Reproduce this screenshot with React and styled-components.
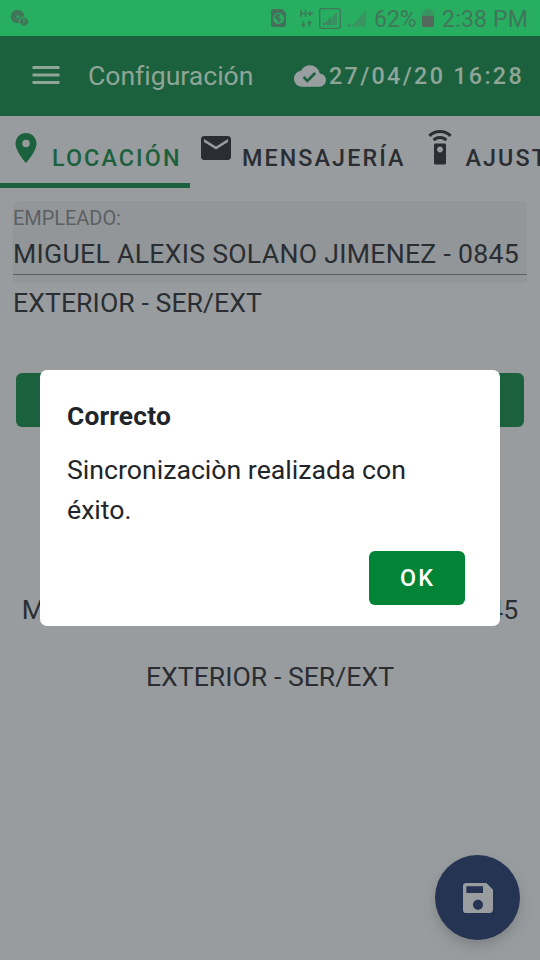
import React from 'react';
import styled, { createGlobalStyle } from 'styled-components';
import { MdCloudDone, MdEmail, MdMenu, MdPlace, MdSave, MdSettingsRemote } from 'react-icons/md';

const GlobalStyle = createGlobalStyle`
  * {
    box-sizing: border-box;
  }
  body {
    margin: 0;
    overflow: hidden;
    background-color: #989c9f;
    font-family: Roboto, sans-serif;
  }
`;

const Screen = styled.div`
  position: relative;
  display: flex;
  flex-direction: column;
  width: 540px;
  height: 960px;
  overflow: hidden;
  background-color: #989c9f;
  color: #2a2e32;
`;

const StatusBar = styled.div`
  display: flex;
  align-items: center;
  flex: none;
  height: 36px;
  padding: 0 12px 0 10px;
  background-color: #27ae60;
  color: #40765a;
  font-size: 23px;
  svg {
    flex: none;
    display: block;
  }
`;

const StatusIcons = styled.div`
  display: flex;
  align-items: center;
  margin-left: auto;
`;

const StatusText = styled.span`
  width: ${props => props.$width}px;
  margin-left: ${props => props.$gap}px;
  padding-top: 2px;
  letter-spacing: ${props => props.$spacing || 0}px;
  white-space: nowrap;
`;

const Gap = styled.span`
  flex: none;
  width: ${props => props.$size}px;
`;

const AppBar = styled.header`
  display: flex;
  align-items: center;
  flex: none;
  height: 80px;
  padding: 0 16px 0 27.5px;
  background-color: #1c613d;
  color: #8fa598;
  > svg {
    margin-bottom: 2px;
  }
`;

const Title = styled.h1`
  margin: 0 0 0 24.5px;
  font-size: 26.67px;
  font-weight: 400;
  letter-spacing: -0.05px;
`;

const SyncDate = styled.div`
  display: flex;
  align-items: center;
  gap: 3px;
  margin-left: auto;
  font-size: 23.33px;
  font-weight: 500;
  letter-spacing: 2.3px;
  white-space: nowrap;
  svg {
    color: #999ea1;
  }
`;

const Tabs = styled.nav`
  display: flex;
  flex: none;
  height: 72px;
`;

const Tab = styled.div`
  display: flex;
  flex: none;
  align-items: flex-start;
  gap: 8px;
  width: ${props => props.$width}px;
  padding: 14px 8px 0;
  border-bottom: 5px solid ${props => props.$active ? '#1c613d' : 'transparent'};
  color: ${props => props.$active ? '#1c613d' : '#2a2e32'};
  svg {
    flex: none;
  }
`;

const TabLabel = styled.span`
  padding-top: 14px;
  font-size: 23.33px;
  font-weight: 500;
  line-height: 28px;
  letter-spacing: 2.08px;
  white-space: nowrap;
`;

const Content = styled.main`
  display: flex;
  flex-direction: column;
  padding: 13px 13px 0;
`;

const Field = styled.div`
  height: 82px;
  background-color: #929699;
  border-radius: 7px 7px 0 0;
`;

const FieldLabel = styled.div`
  height: 32px;
  padding-top: 4px;
  color: #5c6063;
  font-size: 20px;
  line-height: 26px;
  letter-spacing: -0.05px;
`;

const FieldValue = styled.div`
  height: 42px;
  border-bottom: 1px solid #5c6063;
  font-size: 26.67px;
  line-height: 42px;
  letter-spacing: 0.27px;
  white-space: nowrap;
`;

const Detail = styled.div`
  height: 40px;
  font-size: 26.67px;
  line-height: 40px;
  letter-spacing: ${props => props.$spacing || 0}px;
`;

const SyncButton = styled.div`
  height: 54px;
  margin: 50px 3px 0;
  background-color: #1c613d;
  border-radius: 6px;
`;

const Summary = styled.div`
  display: flex;
  flex-direction: column;
  gap: 27px;
  margin-top: 163px;
  text-align: center;
  white-space: nowrap;
`;

const Fab = styled.button`
  position: absolute;
  right: 20px;
  bottom: 20px;
  display: flex;
  align-items: center;
  justify-content: center;
  width: 85px;
  height: 85px;
  padding: 0;
  border: 0;
  border-radius: 50%;
  background-color: #263454;
  color: #999da0;
  box-shadow: 0 5px 9px -1px rgba(0, 0, 0, 0.1), 0 8px 18px rgba(0, 0, 0, 0.08);
`;

const Dialog = styled.section`
  position: absolute;
  top: 370px;
  left: 40px;
  display: flex;
  flex-direction: column;
  width: 460px;
  height: 256px;
  padding: 26px 35px 21px 27px;
  border-radius: 7px;
  background-color: #ffffff;
  color: #212529;
`;

const DialogTitle = styled.h2`
  margin: 0;
  font-size: 26.3px;
  font-weight: 700;
  line-height: 40px;
  letter-spacing: 0.2px;
`;

const DialogText = styled.p`
  margin: 14px 0 0;
  font-size: 26.67px;
  line-height: 40px;
`;

const DialogButton = styled.button`
  align-self: flex-end;
  width: 96px;
  height: 54px;
  margin-top: auto;
  padding: 0 0 0 1px;
  border: 0;
  border-radius: 6px;
  background-color: #028436;
  color: #ffffff;
  font-family: inherit;
  font-size: 23.33px;
  font-weight: 500;
  letter-spacing: 2.08px;
`;

const NotificationIcon = () => (
  <svg width="20" height="20" viewBox="0 -1 20 20">
    <circle cx="7.5" cy="7.5" r="6.8" fill="#40765a" />
    <circle cx="7.8" cy="7.5" r="1.3" fill="#27ae60" />
    <circle cx="14" cy="12.7" r="5.2" fill="#27ae60" />
    <circle cx="14" cy="12.7" r="4" fill="#40765a" />
    <path d="M14 10v3.2M14 14.4v1" stroke="#27ae60" strokeWidth="1" />
  </svg>
);

const DataSaverIcon = () => (
  <svg width="16" height="18" viewBox="0 0 16 18">
    <path d="M2 0h9l4 4v12q0 2-2 2H2q-2 0-2-2V2Q0 0 2 0z" fill="#45705b" />
    <circle cx="7.5" cy="9.5" r="5.4" fill="#27ae60" />
    <path d="M6 5l3.5.2-.8 2L6.5 8l2.7 1.5.8 1.8-2.5 3-.8-3L3 8.2z" fill="#45705b" />
  </svg>
);

const NetworkIcon = () => (
  <svg width="13" height="19" viewBox="0 0 13 19">
    <path d="M1 1v7M5.5 1v7M1 4.5h4.5M7 4.5h6M10 2v5" fill="none" stroke="#40765a" strokeWidth="1.5" />
    <path d="M3.5 18V12M9.5 12v6" stroke="#40765a" strokeWidth="1.6" />
    <path d="M1 15.2h5L3.5 18.5zM7 14.6h5L9.5 11.3z" fill="#40765a" />
  </svg>
);

const BoxedSignalIcon = () => (
  <svg width="22" height="21" viewBox="0 0 22 21">
    <rect x="0.7" y="0.7" width="20.6" height="19.6" rx="1.5" fill="none" stroke="#40765a" strokeWidth="1.3" />
    <path d="M11 17v-6l7-7v13z" fill="#3a9060" />
    <path d="M4 15h2v2H4zM7 13h1.5v4H7zM9.5 10.5H11V17H9.5z" fill="#40765a" />
  </svg>
);

const SignalIcon = () => (
  <svg width="18" height="18" viewBox="0 0 18 18">
    <path d="M3.5 17.5L18 1v16.5z" fill="#399461" />
    <path d="M0 15.5h2.5v2H0z" fill="#40765a" />
  </svg>
);

const BatteryIcon = () => (
  <svg width="12" height="18" viewBox="0 0 12 18">
    <path d="M3 0h6v2h2q1 0 1 1v4H0V3q0-1 1-1h2z" fill="#399461" />
    <path d="M0 7h12v10q0 1-1 1H1q-1 0-1-1z" fill="#54695d" />
  </svg>
);

const tabs = [
  { label: 'LOCACIÓN', icon: MdPlace, width: 190, active: true },
  { label: 'MENSAJERÍA', icon: MdEmail, width: 223.5 },
  { label: 'AJUSTES', icon: MdSettingsRemote, width: 180 },
];

const employee = 'MIGUEL ALEXIS SOLANO JIMENEZ - 0845';
const location = 'EXTERIOR - SER/EXT';

export default function App() {
  return (
    <Screen>
      <GlobalStyle />
      <StatusBar>
        <NotificationIcon />
        <StatusIcons>
          <DataSaverIcon />
          <Gap $size={13} />
          <NetworkIcon />
          <Gap $size={6} />
          <BoxedSignalIcon />
          <Gap $size={7} />
          <SignalIcon />
          <StatusText $gap={8} $width={42}>62%</StatusText>
          <Gap $size={6} />
          <BatteryIcon />
          <StatusText $gap={8} $width={86} $spacing={0.2}>2:38 PM</StatusText>
        </StatusIcons>
      </StatusBar>
      <AppBar>
        <MdMenu size={36} />
        <Title>Configuración</Title>
        <SyncDate>
          <MdCloudDone size={32} />
          27/04/20 16:28
        </SyncDate>
      </AppBar>
      <Tabs>
        {tabs.map(({ label, icon: TabIcon, width, active }) => (
          <Tab key={label} $width={width} $active={active}>
            <TabIcon size={36} />
            <TabLabel>{label}</TabLabel>
          </Tab>
        ))}
      </Tabs>
      <Content>
        <Field>
          <FieldLabel>EMPLEADO:</FieldLabel>
          <FieldValue>{employee}</FieldValue>
        </Field>
        <Detail $spacing={0.05}>{location}</Detail>
        <SyncButton />
        <Summary>
          <Detail>{employee}</Detail>
          <Detail>{location}</Detail>
        </Summary>
      </Content>
      <Fab>
        <MdSave size={40} />
      </Fab>
      <Dialog>
        <DialogTitle>Correcto</DialogTitle>
        <DialogText>Sincronizaciòn realizada con éxito.</DialogText>
        <DialogButton>OK</DialogButton>
      </Dialog>
    </Screen>
  );
}
